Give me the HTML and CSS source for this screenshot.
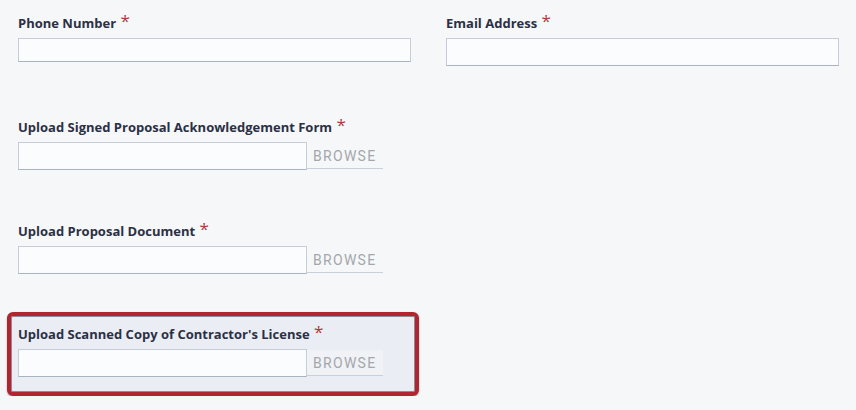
FILE: index.html
```html
<!DOCTYPE html>
<html lang="en">
<head>
    <meta charset="UTF-8">
    <title>Proposal Form</title>
    <link rel="stylesheet" href="styles.css">
</head>
<body>
    <form class="form">
        <div class="row">
            <div class="field">
                <label class="label">Phone Number <span class="req">*</span></label>
                <input class="input short" type="text">
            </div>
            <div class="field">
                <label class="label">Email Address <span class="req">*</span></label>
                <input class="input" type="text">
            </div>
        </div>

        <div class="upload">
            <label class="label">Upload Signed Proposal Acknowledgement Form <span class="req">*</span></label>
            <div class="file">
                <input class="input file-name" type="text">
                <button type="button" class="browse">BROWSE</button>
            </div>
        </div>

        <div class="upload">
            <label class="label">Upload Proposal Document <span class="req">*</span></label>
            <div class="file">
                <input class="input file-name" type="text">
                <button type="button" class="browse">BROWSE</button>
            </div>
        </div>

        <div class="upload active">
            <label class="label">Upload Scanned Copy of Contractor's License <span class="req">*</span></label>
            <div class="file">
                <input class="input file-name" type="text">
                <button type="button" class="browse">BROWSE</button>
            </div>
        </div>
    </form>
</body>
</html>
```

FILE: styles.css
```css
body {
    margin: 0;
    background: #f6f7f9;
    font-family: 'Open Sans', sans-serif;
    color: #2b3044;
}

.form {
    padding: 14px 17px 0 18px;
}

.row {
    display: grid;
    grid-template-columns: 393px 393px;
    column-gap: 35px;
    align-items: start;
}

.label {
    display: block;
    font-size: 13px;
    font-weight: 700;
    line-height: 18px;
    color: #2b3044;
}

.req {
    color: #b5373b;
    font-size: 17px;
    font-weight: 400;
    line-height: 0;
    position: relative;
    top: -1px;
    margin-left: 1px;
}

.input {
    display: block;
    box-sizing: border-box;
    width: 100%;
    height: 28px;
    margin: 6px 0 0;
    border: 1px solid #c5cdd9;
    border-bottom-color: #a9b3c2;
    border-radius: 0;
    background: #fbfcfd;
    font: inherit;
}

.input.short {
    height: 24px;
}

.upload {
    margin-top: 52px;
    width: 393px;
}

.upload + .upload {
    margin-top: 52px;
}

.file {
    display: flex;
    align-items: flex-end;
    margin-top: 6px;
}

.file-name {
    width: 289px;
    margin: 0;
}

.browse {
    width: 76px;
    height: 26px;
    padding: 0 0 0 6px;
    margin-bottom: 1px;
    text-align: left;
    border: none;
    border-bottom: 1px solid #c8d0dc;
    background: transparent;
    color: #a3a7ad;
    font-family: 'Roboto', sans-serif;
    font-size: 14px;
    letter-spacing: 1.3px;
}

.upload.active {
    box-sizing: border-box;
    margin-left: -11px;
    margin-top: 38px;
    width: 412px;
    padding: 9px 7px 15px;
    border: 4px solid #b0252f;
    border-radius: 6px;
    background: #eaedf4;
    box-shadow: inset 0 0 0 1px #8a8d96, 0 1px 2px rgba(0, 0, 0, 0.3);
}

.upload.active .browse {
    background: #f1f2f5;
}
```
